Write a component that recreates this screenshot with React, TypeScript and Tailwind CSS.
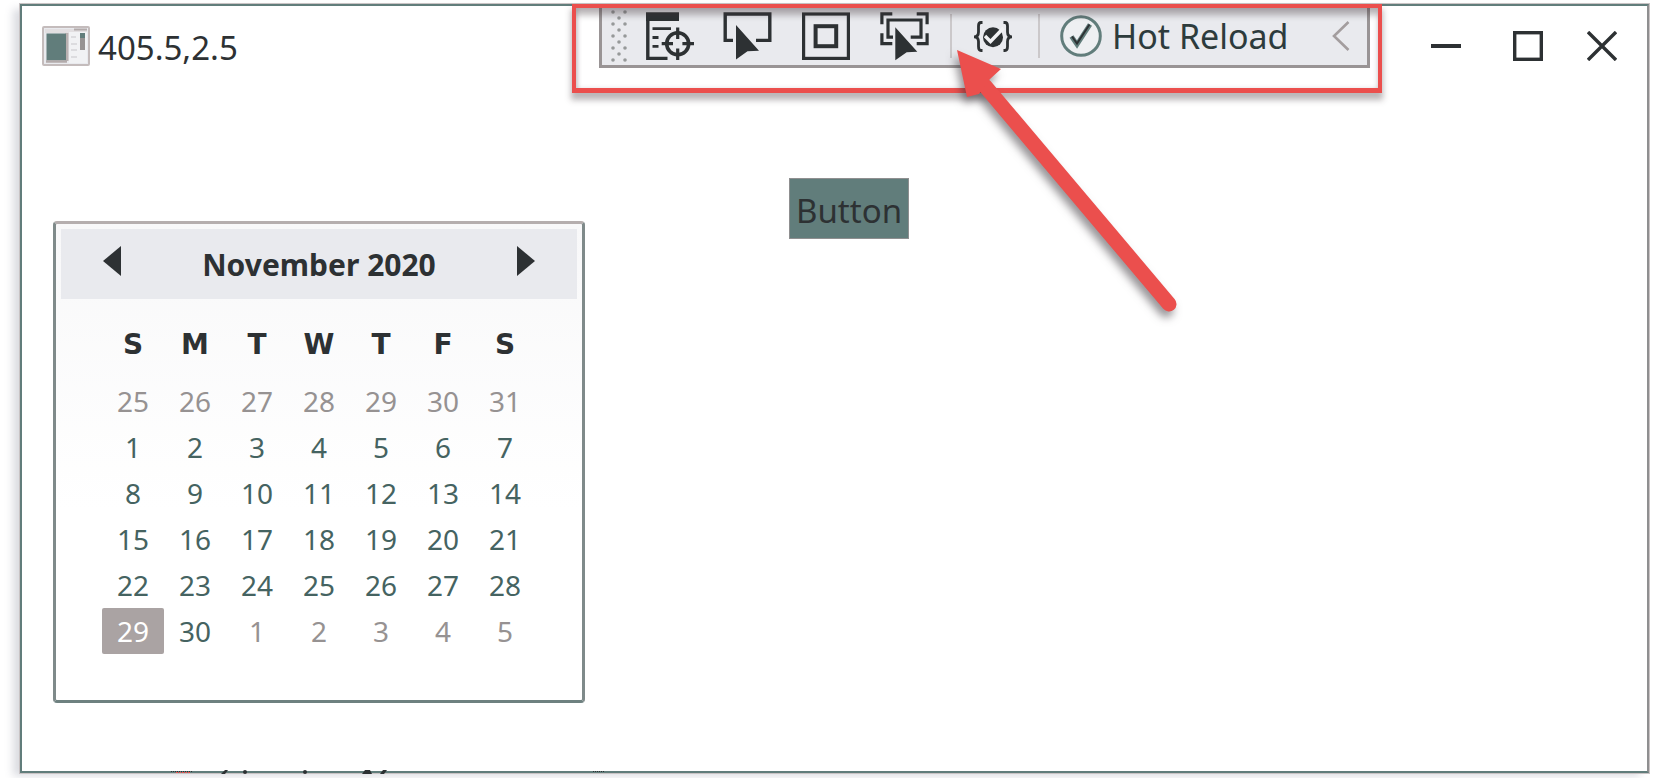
import type { ReactNode } from "react";

const WEEKDAYS = [
  { short: "S", name: "Sunday" },
  { short: "M", name: "Monday" },
  { short: "T", name: "Tuesday" },
  { short: "W", name: "Wednesday" },
  { short: "T", name: "Thursday" },
  { short: "F", name: "Friday" },
  { short: "S", name: "Saturday" },
];

const WEEKS = [
  [25, 26, 27, 28, 29, 30, 31],
  [1, 2, 3, 4, 5, 6, 7],
  [8, 9, 10, 11, 12, 13, 14],
  [15, 16, 17, 18, 19, 20, 21],
  [22, 23, 24, 25, 26, 27, 28],
  [29, 30, 1, 2, 3, 4, 5],
];

function dayClass(week: number, day: number) {
  if (week === 5 && day === 29) return "rounded-xs bg-[#aaa3a3] text-white";
  if ((week === 0 && day > 7) || (week === 5 && day < 8)) return "text-[#969292]";
  return "text-[#456361]";
}

function AppIcon() {
  return (
    <svg width="48" height="40" viewBox="0 0 48 40" aria-hidden="true">
      <rect x="1" y="1" width="46" height="38" rx="1" fill="#e9eaee" stroke="#c4bcbc" strokeWidth="2" />
      <rect x="3" y="3" width="42" height="4" fill="#e2dfe1" />
      <path d="M32 3.500H45" stroke="#b3abab" strokeWidth="2" />
      <path d="M25 7V35" stroke="#b9b1b1" strokeWidth="3" />
      <rect x="4.500" y="7.500" width="19.500" height="27" fill="#617d7b" />
      <path d="M4 35.500H25" stroke="#b3abab" strokeWidth="2.500" />
      <rect x="27" y="6" width="18" height="31" fill="#f1f2f4" />
      <path d="M29 11H34M29 18H35M29 24H35M29 31H35" stroke="#dcdcdf" strokeWidth="2" />
      <rect x="38" y="7" width="5" height="17" fill="#969292" />
      <rect x="38" y="7" width="5" height="5" fill="#617d7b" />
    </svg>
  );
}

function LiveTreeIcon() {
  return (
    <svg width="50" height="50" viewBox="0 0 50 50" fill="none" stroke="#2d3133" strokeWidth="3.4" aria-hidden="true">
      <path d="M1 1.3H34V10H1Z" fill="#2d3133" stroke="none" />
      <path d="M2.8 8V47.4H22.5" />
      <path d="M7.5 17.7H26M7.5 26.5H13.5M7.5 35.3H13.5" strokeWidth="2.8" />
      <circle cx="32.7" cy="32.7" r="11" strokeWidth="3.6" />
      <path d="M16.7 32.7H28M37.4 32.7H49M32.7 16.5V28M32.7 37.4V49" strokeWidth="3.2" />
    </svg>
  );
}

function SelectElementIcon() {
  return (
    <svg width="50" height="50" viewBox="0 0 50 50" fill="none" stroke="#2d3133" strokeWidth="3.4" aria-hidden="true">
      <path d="M10 29.4H2.2V3H46.8V29.4H33" />
      <path d="M13 14L36 39.7L24.5 40.3L13 48.6Z" fill="#2d3133" stroke="none" />
    </svg>
  );
}

function AdornersIcon() {
  return (
    <svg width="50" height="50" viewBox="0 0 50 50" fill="none" stroke="#2d3133" aria-hidden="true">
      <rect x="2.6" y="3" width="44.8" height="44.4" strokeWidth="3.2" />
      <rect x="14.6" y="15.2" width="20.6" height="20" strokeWidth="4" />
    </svg>
  );
}

function TrackFocusIcon() {
  return (
    <svg width="50" height="50" viewBox="0 0 50 50" fill="none" stroke="#2d3133" strokeWidth="3.2" aria-hidden="true">
      <path d="M2.9 13.3V2.9H13.3M37.7 2.9H48.1V13.3M2.9 22.3V32.7H13.3M37.7 32.7H48.1V22.3" />
      <path d="M14 26.2H9V9H42V26.2H31.7" />
      <path d="M16.3 16.3L38.3 40.7L27.7 41.3L16.3 49.3Z" fill="#2d3133" stroke="none" />
    </svg>
  );
}

function BindingIcon() {
  return (
    <svg width="42" height="50" viewBox="0 0 42 50" fill="none" stroke="#2d3133" strokeWidth="2.8" aria-hidden="true">
      <path d="M10.5 11.5H9Q6.5 11.5 6.5 15V21Q6.5 25.8 2 25.8Q6.5 25.8 6.5 30.6V35.5Q6.5 39.5 9 39.5H10.5" />
      <path d="M31.5 11.5H33Q35.5 11.5 35.5 15V21Q35.5 25.8 40 25.8Q35.5 25.8 35.5 30.6V35.5Q35.5 39.5 33 39.5H31.5" />
      <circle cx="21" cy="26.3" r="10" fill="#2d3133" stroke="none" />
      <path d="M13 25L18.5 30.5L31.5 17" stroke="#f1f2f4" strokeWidth="3.4" />
    </svg>
  );
}

function HotReloadIcon() {
  return (
    <svg width="42" height="42" viewBox="0 0 42 42" fill="none" aria-hidden="true">
      <circle cx="21" cy="21" r="19.3" fill="#eef0f2" stroke="#617d7b" strokeWidth="3" />
      <path d="M11.500 21.5L17 29.5L30 9.5" stroke="#617d7b" strokeWidth="4.8" />
      <path d="M12 21.5L17 28.5L29.5 9.5" stroke="#2d3133" strokeWidth="2" />
    </svg>
  );
}

function Grip() {
  const dots: ReactNode[] = [];
  for (let row = 0; row < 9; row++) {
    const xs = row % 2 === 0 ? [2, 14] : [8];
    xs.forEach((x) => dots.push(<circle key={`${row}-${x}`} cx={x} cy={2 + row * 6} r="1.8" />));
  }
  return (
    <svg className="ml-[9px] shrink-0" width="16" height="52" viewBox="0 0 16 52" fill="#969999" aria-hidden="true">
      {dots}
    </svg>
  );
}

function DebugToolbar() {
  return (
    <div
      role="toolbar"
      aria-label="Debug toolbar"
      className="mr-[12px] ml-[27px] flex h-[62px] items-center border-x-3 border-b-3 border-[#999495] bg-[#e9eaee]"
    >
      <Grip />
      <div className="ml-[18px] flex items-center gap-[28px]">
        <button type="button" aria-label="Go to Live Visual Tree"><LiveTreeIcon /></button>
        <button type="button" aria-label="Select Element"><SelectElementIcon /></button>
        <button type="button" aria-label="Display Layout Adorners"><AdornersIcon /></button>
        <button type="button" aria-label="Track Focused Element"><TrackFocusIcon /></button>
      </div>
      <span className="ml-[21px] h-[44px] w-[2px] bg-[#cbc8ca]" />
      <button type="button" aria-label="XAML Binding Failures" className="ml-5"><BindingIcon /></button>
      <span className="ml-6 h-[44px] w-[2px] bg-[#cbc8ca]" />
      <button type="button" className="ml-5 flex items-center gap-[10px] text-[34px] leading-[46px] whitespace-nowrap text-[#2d3b3c]">
        <HotReloadIcon />
        Hot Reload
      </button>
      <button type="button" aria-label="Collapse toolbar" className="mr-[17px] ml-auto">
        <svg width="18" height="30" viewBox="0 0 18 30" fill="none" stroke="#a39d9e" strokeWidth="2.6" aria-hidden="true">
          <path d="M16.5 1L2 15L16.5 29" />
        </svg>
      </button>
    </div>
  );
}

function Highlight({ children }: { children: ReactNode }) {
  return (
    <div className="relative z-10 -mt-[2px] h-[89px] pt-[2px]">
      {children}
      <div className="pointer-events-none absolute inset-0 border-[#eb4f4d] border-4 border-b-5 shadow-[0_6px_6px_1px_rgba(60,50,55,0.35),inset_0_8px_6px_-1px_rgba(60,50,55,0.35),inset_2px_0_4px_rgba(60,50,55,0.15)]" />
      <svg
        className="pointer-events-none absolute top-[36px] left-[370px] overflow-visible drop-shadow-[-3px_6px_4px_rgba(45,40,45,0.5)]"
        width="250"
        height="290"
        viewBox="0 0 250 290"
        aria-hidden="true"
      >
        <path d="M43 46L227 264" stroke="#eb4f4d" strokeWidth="15" strokeLinecap="round" />
        <path d="M15 10L59 29L48 39L37 54L25 57Z" fill="#eb4f4d" />
      </svg>
    </div>
  );
}

function WindowControls() {
  return (
    <div className="flex items-center justify-end gap-11 pt-[25px] pr-[30px]">
      <button type="button" aria-label="Minimize" className="mr-2">
        <svg width="30" height="30" viewBox="0 0 30 30" stroke="#2d3133" strokeWidth="4" aria-hidden="true">
          <path d="M0 15H30" />
        </svg>
      </button>
      <button type="button" aria-label="Maximize">
        <svg width="30" height="30" viewBox="0 0 30 30" fill="none" stroke="#2d3133" strokeWidth="3.4" aria-hidden="true">
          <rect x="1.7" y="1.7" width="26.6" height="26.6" />
        </svg>
      </button>
      <button type="button" aria-label="Close">
        <svg width="30" height="30" viewBox="0 0 30 30" stroke="#2d3133" strokeWidth="3.4" aria-hidden="true">
          <path d="M1 1L29 29M29 1L1 29" />
        </svg>
      </button>
    </div>
  );
}

function Calendar() {
  return (
    <section
      aria-label="Calendar"
      className="rounded-sm border-3 border-t-[#b5aeae] border-r-[#7f8a8a] border-b-[#6e8180] border-l-[#7f8a8a] bg-linear-to-b from-[#f8f8f9] to-white to-60% p-[5px] pb-[46px]"
    >
      <div className="flex h-[70px] items-center justify-between bg-[#e9eaee] px-[42px] pt-[2px]">
        <button type="button" aria-label="Previous month">
          <svg className="mb-2" width="18" height="30" viewBox="0 0 18 30" fill="#2d3133" aria-hidden="true">
            <path d="M18 0V30L0 15Z" />
          </svg>
        </button>
        <h2 className="text-[30px] leading-[40px] font-bold text-[#2d3133]">November 2020</h2>
        <button type="button" aria-label="Next month">
          <svg className="mb-2" width="18" height="30" viewBox="0 0 18 30" fill="#2d3133" aria-hidden="true">
            <path d="M0 0V30L18 15Z" />
          </svg>
        </button>
      </div>
      <table className="mx-[41px] mt-5 table-fixed border-collapse text-center">
        <thead>
          <tr>
            {WEEKDAYS.map((day) => (
              <th
                key={day.name}
                scope="col"
                abbr={day.name}
                className="h-[59px] w-[62px] p-0 pb-2 font-['DejaVu_Sans',sans-serif] text-[28px] leading-[32px] font-bold text-[#2d3133]"
              >
                {day.short}
              </th>
            ))}
          </tr>
        </thead>
        <tbody>
          {WEEKS.map((week, w) => (
            <tr key={w}>
              {week.map((day) => (
                <td key={day} className="h-[46px] p-0">
                  <button type="button" className={`block h-[46px] w-full text-[28px] leading-[46px] ${dayClass(w, day)}`}>
                    {day}
                  </button>
                </td>
              ))}
            </tr>
          ))}
        </tbody>
      </table>
    </section>
  );
}

/* Content behind the window that shows through along its bottom edge. */
function EdgeMarks() {
  return (
    <svg className="pointer-events-none absolute -bottom-[3px] left-[149px]" width="460" height="4" viewBox="0 0 460 4" fill="#2d3133" aria-hidden="true">
      <path d="M0 1.5H22" stroke="#2d3133" strokeDasharray="1 1" />
      <path d="M5 2.5H20" stroke="#eb4f4d" strokeDasharray="2 1" />
      <path d="M50 4L54 0H57L54 4Z" />
      <circle cx="74" cy="2" r="2" />
      <circle cx="134" cy="2" r="2" />
      <path d="M191 4L194 0H199L201 4Z" />
      <path d="M209 4L212 0H216L213 4Z" />
      <path d="M422 1.5H434" stroke="#2d3133" strokeDasharray="1 1" />
    </svg>
  );
}

export default function App() {
  return (
    <div className="flex min-h-screen bg-white pt-1 pr-1 pb-[5px] pl-5 font-['Noto_Sans','Open_Sans',sans-serif]">
      <div className="relative flex flex-1 flex-col border-2 border-[#617d7b] border-r-[#8f8f90] bg-white shadow-[0_0_0_1px_#c9c3c4,-8px_4px_8px_-1px_rgba(90,95,120,0.22)]">
        <header className="grid grid-cols-[550fr_810px_265fr] items-start">
          <div className="flex items-start gap-2 pt-5 pl-5">
            <AppIcon />
            <h1 className="text-[33px] leading-[44px] text-[#2d3133]">405.5,2.5</h1>
          </div>
          <Highlight>
            <DebugToolbar />
          </Highlight>
          <WindowControls />
        </header>
        <main className="flex items-start px-[31px] pt-[85px] pb-[67px]">
          <div className="pt-[43px]">
            <Calendar />
          </div>
          <button
            type="button"
            className="ml-[204px] h-[61px] border border-[#8f8f90] bg-[#617d7b] px-[6px] pt-1 text-[33px] leading-[55px] text-[#2d3133]"
          >
            Button
          </button>
        </main>
        <EdgeMarks />
      </div>
    </div>
  );
}
